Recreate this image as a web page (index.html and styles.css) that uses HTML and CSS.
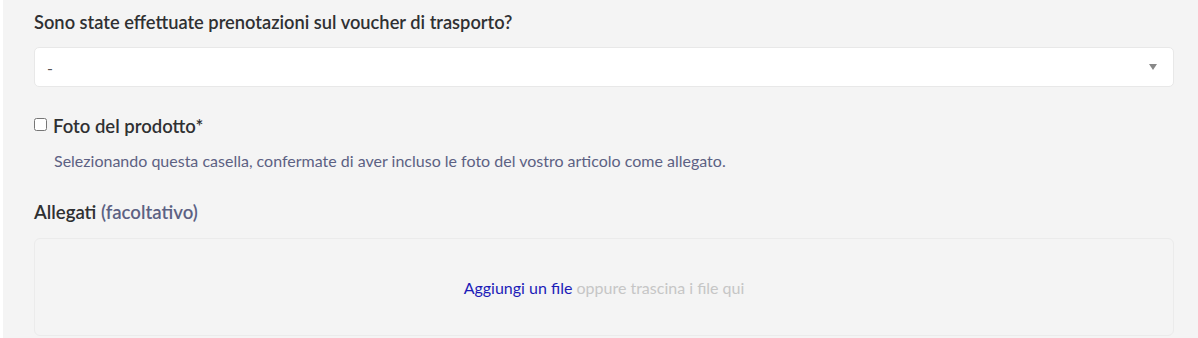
FILE: index.html
```html
<!DOCTYPE html>
<html lang="it">
<head>
    <meta charset="UTF-8">
    <meta name="viewport" content="width=device-width, initial-scale=1.0">
    <title>Modulo</title>
    <link rel="stylesheet" href="styles.css">
</head>
<body>
    <div class="form">
        <div class="field">
            <label class="field-label" for="voucher">Sono state effettuate prenotazioni sul voucher di trasporto?</label>
            <div class="select" id="voucher">
                <span>-</span>
                <svg class="select-arrow" width="8" height="6" viewBox="0 0 8 6"><path d="M0 0H8L4 6Z" fill="#888"/></svg>
            </div>
        </div>

        <div class="field check-field">
            <label class="check-label">
                <input type="checkbox" class="check">
                <span>Foto del prodotto*</span>
            </label>
            <p class="hint">Selezionando questa casella, confermate di aver incluso le foto del vostro articolo come allegato.</p>
        </div>

        <div class="field">
            <div class="field-label big">Allegati <span class="optional">(facoltativo)</span></div>
            <div class="dropzone">
                <a href="#" class="add-file">Aggiungi un file</a>&nbsp;<span class="drop-text">oppure trascina i file qui</span>
            </div>
        </div>
    </div>
</body>
</html>
```
FILE: styles.css
```css
body {
    margin: 0;
    background-color: #fff;
    font-family: Lato, "Open Sans", sans-serif;
    color: #333;
}
.form {
    margin-left: 3px;
    background-color: #f4f4f4;
    padding: 11px 24px 0 31px;
    height: 327px;
    overflow: hidden;
}
.field-label {
    display: block;
    font-size: 18.3px;
    font-weight: 600;
    color: #2f3032;
    line-height: 22px;
    margin-bottom: 14px;
}
.field-label.big {
    font-size: 18.6px;
    line-height: 24px;
    margin-bottom: 14px;
}
.optional {
    color: #5c6183;
}
.select {
    display: flex;
    align-items: center;
    justify-content: space-between;
    height: 38px;
    padding: 0 16px 0 12px;
    background-color: #fff;
    border: 1px solid #e8e8e8;
    border-radius: 5px;
    font-size: 16px;
    color: #555;
}
.select-arrow {
    display: block;
}
.check-field {
    margin-top: 27px;
    margin-bottom: 29px;
}
.check-label {
    display: flex;
    align-items: center;
    gap: 6px;
    font-size: 18.5px;
    font-weight: 600;
    line-height: 24px;
    color: #2f3032;
}
.check {
    flex-shrink: 0;
    margin: 0;
    width: 13px;
    height: 13px;
    position: relative;
    top: -2px;
}
.hint {
    margin: 13px 0 0 20px;
    font-size: 16px;
    line-height: 20px;
    color: #5c6183;
}
.dropzone {
    height: 96px;
    border: 1px solid #ebebeb;
    border-radius: 6px;
    display: flex;
    align-items: center;
    justify-content: center;
    font-size: 16px;
}
.add-file {
    color: #1c1cb8;
    text-decoration: none;
}
.drop-text {
    color: #c6c6c6;
}
```
